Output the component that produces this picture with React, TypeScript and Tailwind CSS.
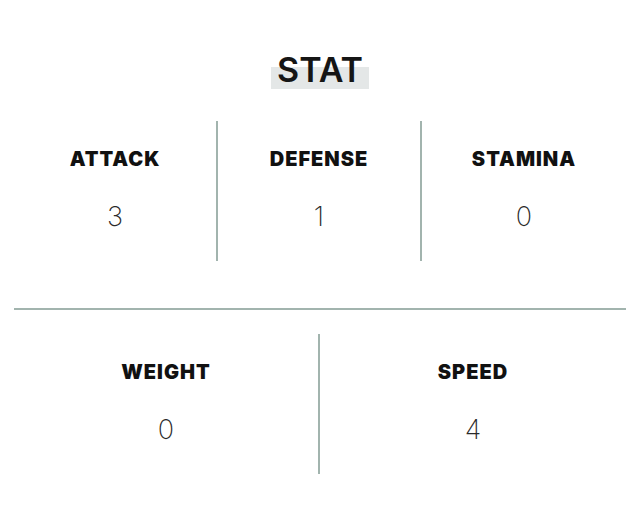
const topStats = [
  { label: 'ATTACK', value: 3 },
  { label: 'DEFENSE', value: 1 },
  { label: 'STAMINA', value: 0 },
]

const bottomStats = [
  { label: 'WEIGHT', value: 0 },
  { label: 'SPEED', value: 4 },
]

const StatCell = ({ label, value, last }: { label: string; value: number; last: boolean }) => (
  <div className={`flex h-[140px] flex-col items-center pt-[26px] ${last ? '' : 'border-r-2 border-[#a2b4ae]'}`}>
    <div className="text-[20px] leading-[24px] font-black text-[#111] tracking-[1px]">{label}</div>
    <div className="mt-[30px] text-[27px] leading-[32px] font-extralight text-[#2a2a2a]">{value}</div>
  </div>
)

const App = () => {
  return (
    <main className="min-h-[529px] w-full bg-white px-[14px] font-['Inter',sans-serif]">
      <div className="flex justify-center pt-[53px]">
        <h1 className="relative inline-block text-[34px] leading-[34px] font-semibold text-[#151515]">
          <span className="absolute -left-[6px] -right-[6px] top-[14px] h-[22px] bg-[#e4e7e7]" />
          <span className="relative">STAT</span>
        </h1>
      </div>

      <div className="mt-[34px] grid grid-cols-3">
        {topStats.map((s, i) => (
          <StatCell key={s.label} label={s.label} value={s.value} last={i === topStats.length - 1} />
        ))}
      </div>

      <div className="mt-[47px] h-[2px] bg-[#a2b4ae]" />

      <div className="mt-[24px] grid grid-cols-2">
        {bottomStats.map((s, i) => (
          <StatCell key={s.label} label={s.label} value={s.value} last={i === bottomStats.length - 1} />
        ))}
      </div>
    </main>
  )
}

export default App
